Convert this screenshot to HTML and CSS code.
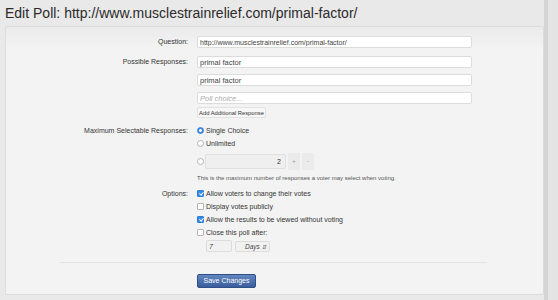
FILE: index.html
```html
<!DOCTYPE html>
<html lang="en">
<head>
    <meta charset="UTF-8">
    <meta name="viewport" content="width=device-width, initial-scale=1.0">
    <title>Edit Poll</title>
    <link rel="stylesheet" href="styles.css">
</head>
<body>
    <div class="page">
        <div class="main">
            <h1>Edit Poll: <span class="poll-url">http://www.musclestrainrelief.com/primal-factor/</span></h1>

            <form class="panel">
                <div class="form-body">

                    <!-- question -->
                    <div class="ctrl-row">
                        <label class="ctrl-label">Question:</label>
                        <div class="ctrl-input">
                            <input type="text" class="text-box" value="http://www.musclestrainrelief.com/primal-factor/">
                        </div>
                    </div>

                    <!-- responses -->
                    <div class="ctrl-row responses">
                        <label class="ctrl-label">Possible Responses:</label>
                        <div class="ctrl-input stack">
                            <input type="text" class="text-box big" value="primal factor">
                            <input type="text" class="text-box big" value="primal factor">
                            <input type="text" class="text-box big" placeholder="Poll choice...">
                            <button type="button" class="small-btn">Add Additional Response</button>
                        </div>
                    </div>

                    <!-- max responses -->
                    <div class="ctrl-row max-row">
                        <label class="ctrl-label">Maximum Selectable Responses:</label>
                        <div class="ctrl-input">
                            <label class="choice"><input type="radio" name="max" checked> Single Choice</label>
                            <label class="choice"><input type="radio" name="max"> Unlimited</label>
                            <div class="choice spin-line">
                                <input type="radio" name="max">
                                <input type="text" class="spin-box" value="2">
                                <span class="spin-btn">+</span>
                                <span class="spin-btn">-</span>
                            </div>
                            <p class="hint">This is the maximum number of responses a voter may select when voting.</p>
                        </div>
                    </div>

                    <!-- options -->
                    <div class="ctrl-row options-row">
                        <label class="ctrl-label">Options:</label>
                        <div class="ctrl-input">
                            <label class="choice"><input type="checkbox" checked> Allow voters to change their votes</label>
                            <label class="choice"><input type="checkbox"> Display votes publicly</label>
                            <label class="choice"><input type="checkbox" checked> Allow the results to be viewed without voting</label>
                            <label class="choice"><input type="checkbox"> Close this poll after:</label>
                            <div class="close-after">
                                <input type="text" class="days-box" value="7">
                                <span class="unit-select">Days <span class="arrows">&#8693;</span></span>
                            </div>
                        </div>
                    </div>

                    <div class="submit-row">
                        <button type="button" class="save-btn">Save Changes</button>
                    </div>
                </div>
            </form>
        </div>
        <div class="gutter"></div>
    </div>
</body>
</html>
```

FILE: styles.css
```css
body {
    margin: 0;
    background-color: #e4e4e4;
    font-family: "Liberation Sans", Arial, sans-serif;
    color: #333;
}

.page {
    display: flex;
    height: 300px;
}

.main {
    width: 539px;
    padding-left: 5px;
    background-color: #e9e9e9;
}

.gutter {
    width: 4px;
    background-color: #d4d4d4;
}

h1 {
    margin: 0 0 4px 0;
    padding-top: 5px;
    font-size: 14px;
    line-height: 17px;
    font-weight: normal;
    color: #2b2b2b;
}

.panel {
    box-sizing: border-box;
    width: 539px;
    height: 269px;
    border: 1px solid #dcdcdc;
    border-radius: 2px;
    background: linear-gradient(#ebebeb, #f3f3f3 22px);
    padding-top: 9px;
}

.form-body {
    margin-left: 54px;
    width: 427px;
}

.ctrl-row {
    display: grid;
    grid-template-columns: 128px 275px;
    column-gap: 9px;
    margin-bottom: 8px;
}

.ctrl-label {
    text-align: right;
    font-size: 7px;
    line-height: 12px;
    color: #333;
}

.max-row .ctrl-label,
.options-row .ctrl-label {
    line-height: 13px;
}

.responses {
    margin-bottom: 6px;
}

.max-row {
    margin-bottom: 4px;
}

.stack {
    display: flex;
    flex-direction: column;
    align-items: flex-start;
    gap: 6px;
}

.text-box {
    box-sizing: border-box;
    width: 275px;
    height: 12px;
    margin: 0;
    padding: 0 2px;
    border: 1px solid #dcdcdc;
    border-radius: 2px;
    background: #fff;
    font-family: inherit;
    font-size: 7px;
    color: #444;
    display: block;
}

.text-box.big {
    font-size: 7.5px;
}

.text-box::placeholder {
    color: #aaa;
    font-style: italic;
}

.small-btn {
    margin-top: -3px;
    height: 11px;
    width: 69px;
    padding: 0;
    border: 1px solid #e2e2e2;
    border-radius: 2px;
    background: #f7f7f7;
    font-family: inherit;
    font-size: 5.8px;
    color: #333;
}

.choice {
    display: flex;
    align-items: center;
    gap: 2px;
    height: 13px;
    font-size: 7px;
    color: #333;
}

.choice input[type="radio"],
.choice input[type="checkbox"] {
    appearance: none;
    box-sizing: border-box;
    width: 7px;
    height: 7px;
    margin: 0;
    border: 1px solid #b3b3b3;
    background: #fff;
    flex-shrink: 0;
}

.choice input[type="radio"] {
    border-radius: 50%;
}

.choice input[type="checkbox"] {
    border-radius: 1px;
}

.choice input[type="radio"]:checked {
    border-color: #2c7fdc;
    background: radial-gradient(circle, #fff 1.2px, #3a8ae3 1.6px);
}

.choice input[type="checkbox"]:checked {
    border-color: #2c7fdc;
    background: #3a8ae3;
    position: relative;
}

.choice input[type="checkbox"]:checked::after {
    content: "";
    position: absolute;
    left: 1.5px;
    top: 0.3px;
    width: 1.5px;
    height: 3px;
    border: solid #fff;
    border-width: 0 1px 1px 0;
    transform: rotate(40deg);
}

.spin-line {
    margin-top: 3px;
    height: 16px;
    gap: 1px;
}

.spin-box {
    box-sizing: border-box;
    width: 81px;
    height: 15px;
    margin: 0;
    padding: 0 4px;
    border: 1px solid #e0e0e0;
    border-radius: 2px;
    background: #efefef;
    text-align: right;
    font-family: inherit;
    font-size: 7px;
    color: #333;
}

.spin-btn {
    width: 12px;
    height: 17px;
    margin-left: 1px;
    background: #ebebeb;
    color: #999;
    font-size: 6px;
    line-height: 17px;
    text-align: center;
}

.hint {
    margin: 4px 0 0 0;
    font-size: 6px;
    line-height: 10px;
    color: #555;
}

.close-after {
    display: flex;
    gap: 3px;
    margin-top: 1px;
    padding-left: 9px;
}

.days-box {
    box-sizing: border-box;
    width: 26px;
    height: 12px;
    margin: 0;
    padding: 0 2px;
    border: 1px solid #dcdcdc;
    border-radius: 2px;
    background: #f1f1f1;
    font-family: inherit;
    font-style: italic;
    font-size: 7px;
    color: #444;
}

.unit-select {
    box-sizing: border-box;
    display: flex;
    justify-content: space-between;
    align-items: center;
    width: 35px;
    height: 11px;
    margin-top: 1px;
    padding: 0 2px 0 9px;
    border: 1px solid #dcdcdc;
    border-radius: 2px;
    background: #f1f1f1;
    font-style: italic;
    font-size: 6.5px;
    color: #444;
}

.unit-select .arrows {
    font-style: normal;
    font-size: 6px;
    color: #666;
}

.submit-row {
    margin-top: 10px;
    border-top: 1px solid #e2e2e2;
    padding: 6px 0 0 137px;
}

.save-btn {
    box-sizing: border-box;
    width: 59px;
    height: 14px;
    padding: 0;
    border: 1px solid #2f4f86;
    border-radius: 2px;
    background: linear-gradient(#6286c0, #3a5e9c);
    color: #fff;
    font-family: inherit;
    font-size: 7px;
}
```
